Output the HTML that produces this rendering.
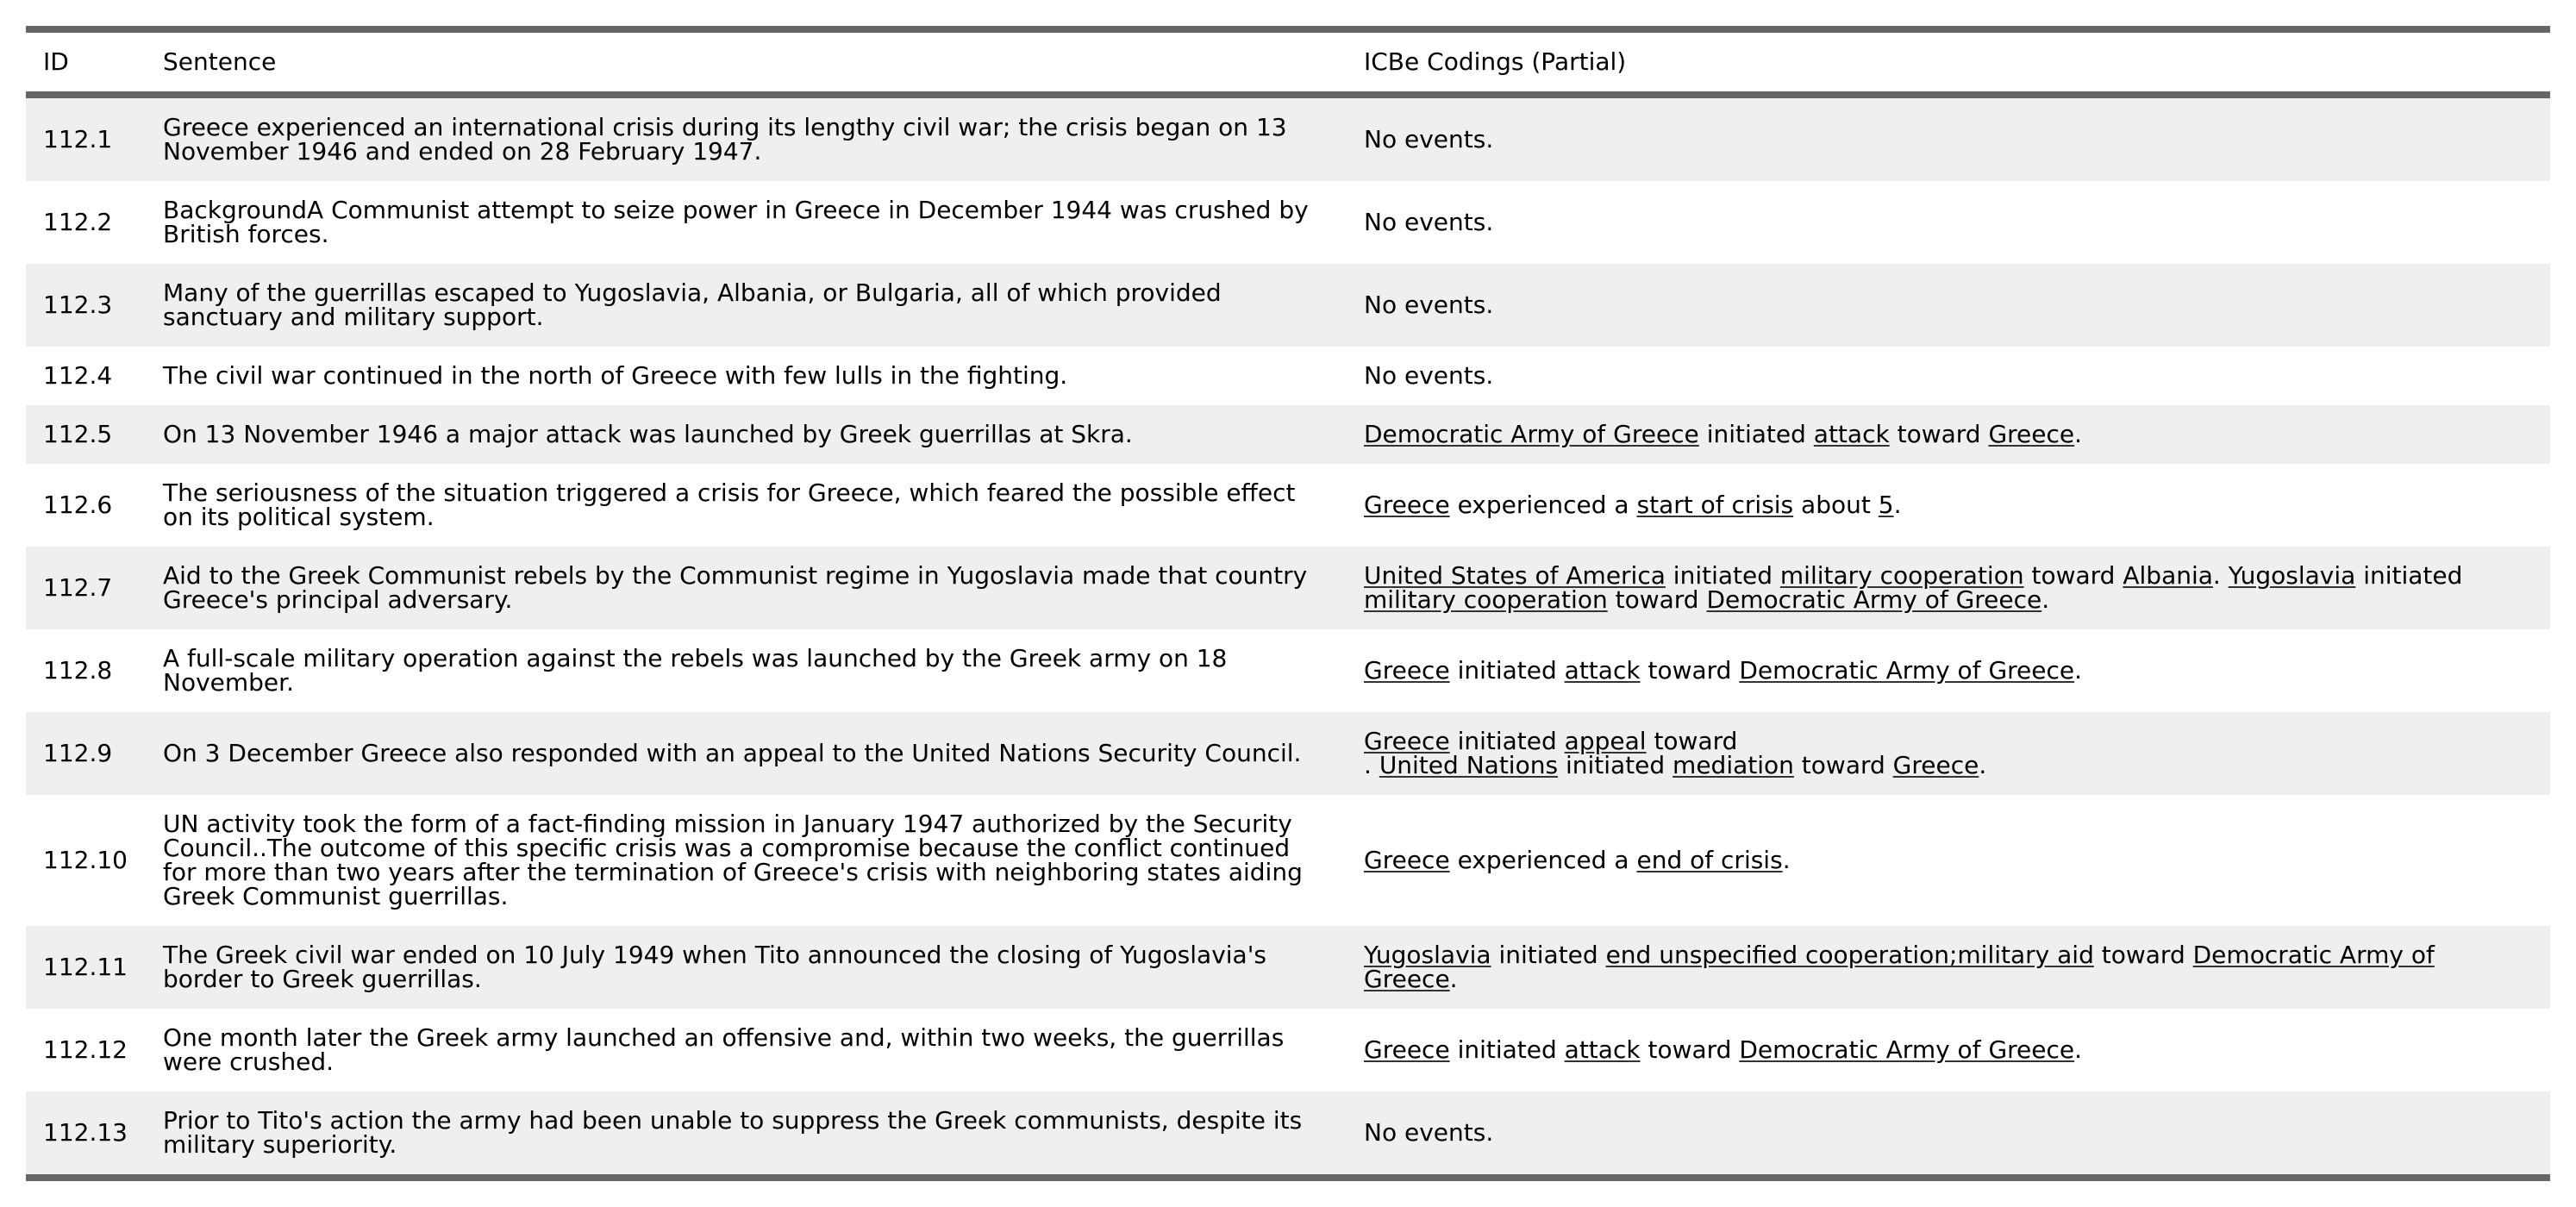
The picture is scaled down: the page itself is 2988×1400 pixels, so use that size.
<!DOCTYPE html>
<html><head><meta charset="utf-8">
<style>
html,body{margin:0;padding:0;background:#fff;width:2988px;height:1400px;overflow:hidden}
table{position:absolute;left:30px;top:30px;width:2928px;border-collapse:collapse;table-layout:fixed;
font-family:"DejaVu Sans","Liberation Sans",sans-serif;font-size:28px;line-height:28px;color:#000}
td,th{padding:20px 20px;vertical-align:middle;text-align:left;font-weight:normal;white-space:nowrap}
thead tr{border-top:8px solid #666;border-bottom:8px solid #666}
tbody tr:last-child{border-bottom:8px solid #666}
tbody tr:nth-child(odd){background:#efefef}
u{text-decoration:underline;text-decoration-color:#333;text-underline-offset:3px}
</style></head><body>
<table>
<colgroup><col style="width:139px"><col style="width:1393px"><col style="width:1396px"></colgroup>
<thead><tr><th>ID</th><th>Sentence</th><th>ICBe Codings (Partial)</th></tr></thead>
<tbody>
<tr><td>112.1</td><td>Greece experienced an international crisis during its lengthy civil war; the crisis began on 13<br>November 1946 and ended on 28 February 1947.</td><td>No events.</td></tr>
<tr><td>112.2</td><td>BackgroundA Communist attempt to seize power in Greece in December 1944 was crushed by<br>British forces.</td><td>No events.</td></tr>
<tr><td>112.3</td><td>Many of the guerrillas escaped to Yugoslavia, Albania, or Bulgaria, all of which provided<br>sanctuary and military support.</td><td>No events.</td></tr>
<tr><td>112.4</td><td>The civil war continued in the north of Greece with few lulls in the fighting.</td><td>No events.</td></tr>
<tr><td>112.5</td><td>On 13 November 1946 a major attack was launched by Greek guerrillas at Skra.</td><td><u>Democratic Army of Greece</u> initiated <u>attack</u> toward <u>Greece</u>.</td></tr>
<tr><td>112.6</td><td>The seriousness of the situation triggered a crisis for Greece, which feared the possible effect<br>on its political system.</td><td><u>Greece</u> experienced a <u>start of crisis</u> about <u>5</u>.</td></tr>
<tr><td>112.7</td><td>Aid to the Greek Communist rebels by the Communist regime in Yugoslavia made that country<br>Greece's principal adversary.</td><td><u>United States of America</u> initiated <u>military cooperation</u> toward <u>Albania</u>. <u>Yugoslavia</u> initiated<br><u>military cooperation</u> toward <u>Democratic Army of Greece</u>.</td></tr>
<tr><td>112.8</td><td>A full-scale military operation against the rebels was launched by the Greek army on 18<br>November.</td><td><u>Greece</u> initiated <u>attack</u> toward <u>Democratic Army of Greece</u>.</td></tr>
<tr><td>112.9</td><td>On 3 December Greece also responded with an appeal to the United Nations Security Council.</td><td><u>Greece</u> initiated <u>appeal</u> toward<br>. <u>United Nations</u> initiated <u>mediation</u> toward <u>Greece</u>.</td></tr>
<tr><td>112.10</td><td>UN activity took the form of a fact-finding mission in January 1947 authorized by the Security<br>Council..The outcome of this specific crisis was a compromise because the conflict continued<br>for more than two years after the termination of Greece's crisis with neighboring states aiding<br>Greek Communist guerrillas.</td><td><u>Greece</u> experienced a <u>end of crisis</u>.</td></tr>
<tr><td>112.11</td><td>The Greek civil war ended on 10 July 1949 when Tito announced the closing of Yugoslavia's<br>border to Greek guerrillas.</td><td><u>Yugoslavia</u> initiated <u>end unspecified cooperation;military aid</u> toward <u>Democratic Army of</u><br><u>Greece</u>.</td></tr>
<tr><td>112.12</td><td>One month later the Greek army launched an offensive and, within two weeks, the guerrillas<br>were crushed.</td><td><u>Greece</u> initiated <u>attack</u> toward <u>Democratic Army of Greece</u>.</td></tr>
<tr><td>112.13</td><td>Prior to Tito's action the army had been unable to suppress the Greek communists, despite its<br>military superiority.</td><td>No events.</td></tr>
</tbody>
</table>
</body></html>
